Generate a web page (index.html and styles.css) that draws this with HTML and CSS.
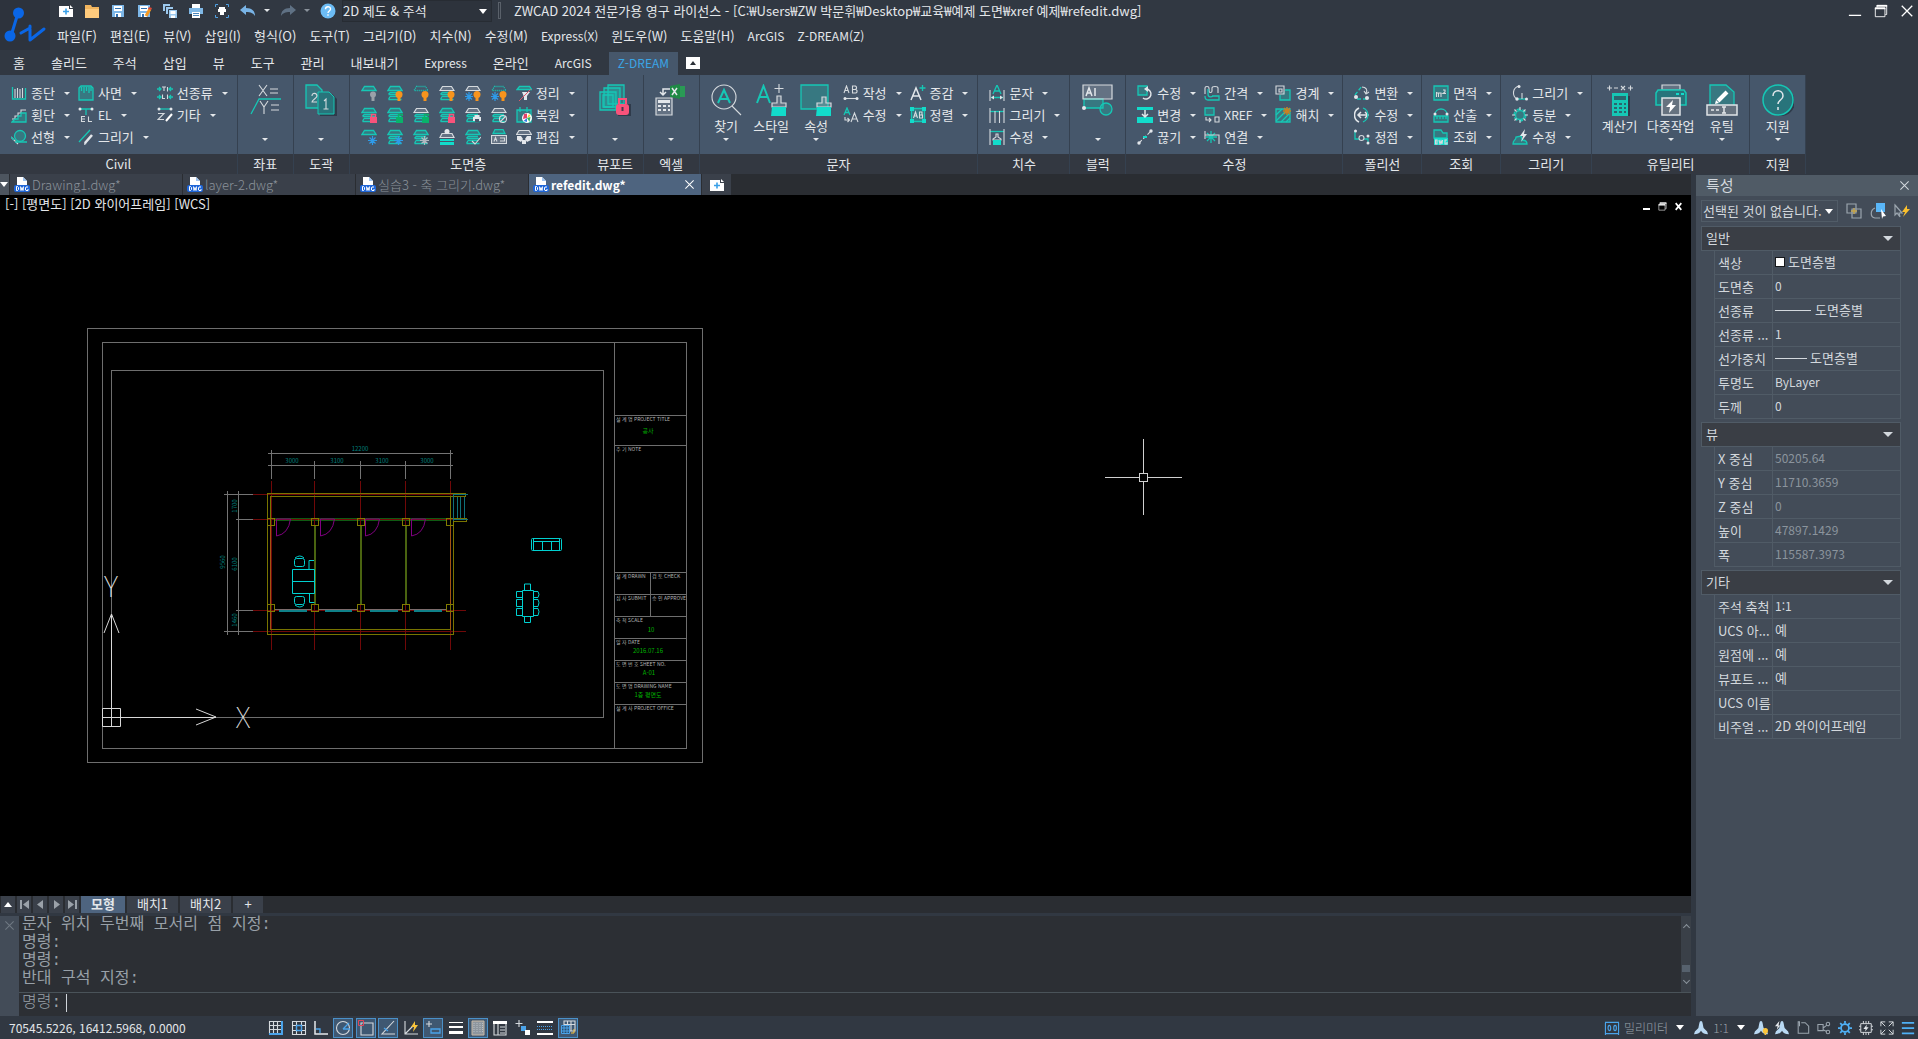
FILE: index.html
```html
<!DOCTYPE html>
<html lang="ko">
<head>
  <meta charset="UTF-8" />
  <meta name="viewport" content="width=device-width, initial-scale=1.0" />
  <title>ZWCAD 2024</title>
  <link rel="stylesheet" href="styles.css">
</head>
<body>
  <!-- icon sprite -->
  <svg class="sprite" aria-hidden="true">
    <!-- quick access -->
    <symbol id="q-new" viewBox="0 0 16 16"><path fill="#fff" d="M1 3h10v3h4v8H1z"/><path fill="#fff" d="M12 2l3 3h-3z"/><path stroke="#3aa0e8" stroke-width="1.6" d="M8 5.500v6M5 8.500h6"/></symbol>
    <symbol id="q-open" viewBox="0 0 16 16"><path fill="#f0b45e" d="M1 2h6l1 2h7v11H1z"/><path fill="#ffcb7d" d="M1 6h14v9H1z"/></symbol>
    <symbol id="q-save" viewBox="0 0 16 16"><path fill="#7db7e8" d="M2 2h12v12H2z"/><path fill="#fff" d="M4 3h8v5H4zM5 10h6v4H5z"/><path fill="#2f6fb0" d="M5 5h6v1H5zM6 11h2v3H6z"/></symbol>
    <symbol id="q-saveas" viewBox="0 0 16 16"><use href="#q-save"/><path stroke="#f59a23" stroke-width="3" d="M14 6l-4 7"/><path fill="#e04a3a" d="M13 4l3 1-1 2-3-1z"/></symbol>
    <symbol id="q-saveall" viewBox="0 0 16 16"><path fill="#9cc9ee" stroke="#2f3742" d="M.5.500h8v8h-8z"/><path fill="#9cc9ee" stroke="#2f3742" d="M3.500 3.500h8v8h-8z"/><path fill="#9cc9ee" stroke="#2f3742" d="M6.500 6.500h9v9h-9z"/><path fill="#fff" d="M8.500 8h5v3h-5zM9 12.500h4V15H9z"/></symbol>
    <symbol id="q-print" viewBox="0 0 16 16"><path fill="#fff" d="M4 1h8v4H4z"/><path fill="#7fb8e6" d="M1 5h14v6H1z"/><path fill="#fff" d="M4 9h8v6H4z"/><path fill="#4a86bb" d="M5 10h6v1H5zM5 12h6v1H5z"/></symbol>
    <symbol id="q-view" viewBox="0 0 16 16"><path fill="none" stroke="#4f9fe0" d="M1.500 4V1.500H4M12 1.500h2.500V4M14.500 12v2.500H12M4 14.500H1.500V12"/><path fill="#fff" d="M5 4h6v2H5zM4 6h8v3H4zM6 9h4v3H6z"/></symbol>
    <symbol id="q-undo" viewBox="0 0 16 16"><path fill="#79b4e6" d="M0 7l6-5v3c6 0 9 3 9 8-2-3-4-4-9-4v3z"/></symbol>
    <symbol id="q-redo" viewBox="0 0 16 16"><path fill="#5f7184" d="M16 7l-6-5v3c-6 0-9 3-9 8 2-3 4-4 9-4v3z"/></symbol>
    <symbol id="q-help" viewBox="0 0 16 16"><circle cx="8" cy="8" r="7.500" fill="#6cbcf5"/><path fill="none" stroke="#fff" stroke-width="1.400" d="M5.500 6.200C5.500 3 10.500 3 10.500 6c0 2-2.500 2-2.500 4M8 11.200v1.600"/></symbol>
    <symbol id="dwg" viewBox="0 0 16 16"><path fill="#fff" d="M3 0h6l4 4v9H3z"/><path fill="#9dc2ee" d="M9 0l4 4H9z"/><rect y="8" width="16" height="7" rx="2" fill="#1f66d8"/><path fill="none" stroke="#fff" d="M2.500 9.500v4h1l1-1v-2l-1-1zM6.500 9.500l.5 4 1-3 1 3 .5-4M14 10h-2l-.5 1v2l.5.500h2v-1.500"/></symbol>

    <!-- civil -->
    <symbol id="c-prof" viewBox="0 0 16 16"><path class="t" d="M1.500 2v12h13V3"/><path class="w" d="M4 4v9M6.500 3v10M9 4v9M11.500 3v10"/></symbol>
    <symbol id="c-slope" viewBox="0 0 16 16"><path class="f" d="M1 3l2-2h10l2 2v12H1z"/><path class="t" d="M3.500 2v4M6 2v6M8.500 2v4M11 2v6M13 2v4"/></symbol>
    <symbol id="c-ltype" viewBox="0 0 16 16"><path class="t" d="M0 4h4M2 2l2 2-2 2M16 4h-4M14 2l-2 2 2 2M0 12h4M2 10l2 2-2 2M16 12h-4M14 10l-2 2 2 2"/><path class="w" d="M5 2h4M7 2v4M10.500 2v4.500M5.500 9.500v4H8M10.500 9.500V14"/></symbol>
    <symbol id="c-cross" viewBox="0 0 16 16"><path class="w" d="M1 12h3V9h3V6h3V3h5"/><path class="f" d="M1 15l3-3h3V9h3V6h5v9z"/></symbol>
    <symbol id="c-el" viewBox="0 0 16 16"><path class="t" d="M2 2h12M8 2v6"/><circle class="wf" cx="2" cy="2" r="1.500"/><circle class="wf" cx="14" cy="2" r="1.500"/><path class="w" d="M7 9.500H3.500v5H7M3.500 12H7M10.500 9.500v5H14"/></symbol>
    <symbol id="c-etc" viewBox="0 0 16 16"><path class="t" d="M2 2h12"/><circle class="wf" cx="2" cy="2" r="1.500"/><circle class="wf" cx="14" cy="2" r="1.500"/><path class="w" d="M1 6.500h6l-6 6h6"/><path stroke="#fff" stroke-width="2" d="M15 7l-6 7"/></symbol>
    <symbol id="c-align" viewBox="0 0 16 16"><circle class="f" cx="9" cy="7" r="5.500"/><path class="w" d="M0 8l7 7"/><path class="t" d="M4 13h12M0 8l3 3"/></symbol>
    <symbol id="c-draw" viewBox="0 0 16 16"><path class="t" d="M1 13L12 1"/><path stroke="#e3e7eb" stroke-width="2.500" d="M14 6l-7 8"/><path class="wf" d="M6 16l.5-3 2 2z"/></symbol>

    <!-- layer base shapes and badges -->
    <symbol id="l-one" viewBox="0 0 16 16"><path class="f" d="M3.500 1.500h9L15 5.500H1z"/></symbol>
    <symbol id="l-onew" viewBox="0 0 16 16"><path class="wo" d="M3.500 1.500h9L15 5.500H1z"/></symbol>
    <symbol id="l-oned" viewBox="0 0 16 16"><path class="t dot" d="M3.500 1.500h9L15 5.500H1z"/></symbol>
    <symbol id="l-rest" viewBox="0 0 16 16"><path class="t" d="M3 7.500h10M1.500 9.500h13M3 11.500h10M1.500 14.500h13M3 7.500l-1.500 2M3 11.500l-1.500 3"/></symbol>
    <symbol id="b-bulb" viewBox="0 0 16 16"><circle cx="12" cy="9.500" r="3.500" fill="#f7941d"/><path fill="#f7941d" d="M10.500 12h3v4h-3z"/></symbol>
    <symbol id="b-off" viewBox="0 0 16 16"><circle cx="12" cy="9.500" r="3" fill="#9aa1a9"/><path fill="#9aa1a9" d="M10.500 12h3v4h-3z"/></symbol>
    <symbol id="b-lock" viewBox="0 0 16 16"><path fill="#f8537b" d="M9 10h7v6H9z"/><path fill="none" stroke="#f8537b" stroke-width="1.500" d="M10.500 10V7.500h4V10"/></symbol>
    <symbol id="b-open" viewBox="0 0 16 16"><path fill="#09b26a" d="M9 10h7v6H9z"/><path fill="none" stroke="#09b26a" stroke-width="1.500" d="M11.500 10V7.500h4V9"/></symbol>
    <symbol id="b-snow" viewBox="0 0 16 16"><path stroke="#2f9be8" stroke-width="1.200" d="M11.500 7v9M7 11.500h9M8.500 8.500l6 6M14.500 8.500l-6 6"/></symbol>
    <symbol id="b-snowl" viewBox="0 0 16 16"><path stroke="#2f9be8" stroke-width="1.200" d="M4 7v9M0 11.500h8M1 8.500l6 6M7 8.500l-6 6"/></symbol>
    <symbol id="b-snowg" viewBox="0 0 16 16"><path stroke="#b1b8c0" stroke-width="1.200" d="M11.500 7v9M7 11.500h9M8.500 8.500l6 6M14.500 8.500l-6 6"/></symbol>
    <symbol id="b-print" viewBox="0 0 16 16"><path class="wf" d="M8 10h8v4H8zM9.500 8h5v2h-5z"/><path fill="#46576b" d="M10 12h4v3h-4z"/></symbol>
    <symbol id="b-ban" viewBox="0 0 16 16"><circle cx="12" cy="12" r="3.500" class="w"/><path class="w" d="M9 15l6-6"/></symbol>
    <symbol id="l-walk" viewBox="0 0 16 16"><path class="wo" d="M3 4.500h10l2 4H1z"/><circle class="wf" cx="8" cy="2.500" r="2.500"/><path class="tf" d="M1 10h14v2H1zM1 13h14v3H1z"/></symbol>
    <symbol id="b-check" viewBox="0 0 16 16"><path class="w" d="M7 12l3 3 6-7"/></symbol>
    <symbol id="l-card" viewBox="0 0 16 16"><path class="f" d="M4 .5h8l2 4H2z"/><path class="wo" d="M.5 6.500h15v8H.5z"/><path class="w" d="M3 12.500l1.500-4 1.500 4M9 9h4.500v3H9"/></symbol>
    <symbol id="l-clean" viewBox="0 0 16 16"><path class="f" d="M3.500 1.500h10l2 3H1z"/><path class="wf" d="M6 7h8l-3 4v4H8v-3z"/><path stroke="#e0586a" d="M3 16L15 4"/></symbol>
    <symbol id="l-restore" viewBox="0 0 16 16"><path class="f" d="M1 3h14v12H1z"/><path class="t" d="M4 0v5M11 0v5"/><circle cx="11" cy="11" r="5" fill="#fff"/><path fill="#f6c833" d="M11 11l3.500-2-1.500-2z"/><path fill="#2eb85c" d="M11 11l3.500-1-1 5z"/><path fill="#317ee8" d="M11 11v4l-3.500-1z"/><path fill="#e4426c" d="M11 11L7 12l1-5 3-.5z"/></symbol>
    <symbol id="l-edit" viewBox="0 0 16 16"><path class="wo" d="M3 1.500h10l2.500 4H.5z"/><path class="wf" d="M1 7h4l2 3-2 3-4-2zM15 7h-4l-2 3 2 3 4-2zM6 11h4v4H6z"/></symbol>

    <!-- text / dimension -->
    <symbol id="t-make" viewBox="0 0 16 16"><path class="w" d="M1 8l2.500-7L6 8M2 5.500h3M9.500 1v7h3.500l1-1V5.500l-1-1H9.500h3l1-1V2l-1-1z"/><path class="w" d="M2 13.500h12"/><circle class="wf" cx="2" cy="13.500" r="1.500"/><circle class="wf" cx="14" cy="13.500" r="1.500"/></symbol>
    <symbol id="t-edit" viewBox="0 0 16 16"><path class="t" d="M1 8l3-7 3 7M2 5.500h4"/><path class="w" d="M8 15l3.500-9 3.500 9M9 12h5M2 10v3h4M4.500 11l2 2-2 2"/></symbol>
    <symbol id="t-inc" viewBox="0 0 16 16"><path class="w2" d="M1 15L6 3l5 12M3 11h6"/><path class="t" d="M12.500 0v6M9.500 3h6"/></symbol>
    <symbol id="t-ord" viewBox="0 0 16 16"><path class="f" d="M1.500 1.500h13v13h-13z"/><path class="tf" d="M0 0h4v4H0zM12 0h4v4h-4zM0 12h4v4H0zM12 12h4v4h-4z"/><path class="w" d="M3.500 11l2-6 2 6M4 9h3M9.500 5v6h3V8h-3 2.500V5z"/></symbol>
    <symbol id="d-text" viewBox="0 0 16 16"><path class="t" d="M4 9l4-9 4 9M5.500 6h5M2 12.500h12"/><path class="w" d="M1 5v11M15 5v11"/><path class="wf" d="M2 12.500l3-2v4zM14 12.500l-3-2v4z"/></symbol>
    <symbol id="d-draw" viewBox="0 0 16 16"><path class="t" d="M1 4.500h14"/><path class="w" d="M1 1v15M6 4v12M10.500 4v12M15 1v15"/></symbol>
    <symbol id="d-edit" viewBox="0 0 16 16"><path class="t" d="M1 2.500h14"/><path class="w" d="M1 0v16M15 0v16M7 5h2v3l3 2v1H4v-1l3-2z"/><path class="tf" d="M4 11h8v5H4z"/></symbol>

    <!-- modify -->
    <symbol id="m-edit" viewBox="0 0 16 16"><path class="f" d="M1 1h9v9H1z"/><path class="w2" d="M9 4a5 5 0 1 1-3 9"/><path class="wf" d="M7 4l4-3v6z"/></symbol>
    <symbol id="m-change" viewBox="0 0 16 16"><path class="tf" d="M0 0h16v3H0zM0 10h16v6H0z"/><path class="w2" d="M8 3v6M5 7l3 3 3-3"/></symbol>
    <symbol id="m-break" viewBox="0 0 16 16"><path class="w dash" d="M2 14L14 2"/><path class="tf" d="M6 7h4v2H6z"/><circle class="wf" cx="2" cy="14" r="1.700"/><circle class="wf" cx="14" cy="2" r="1.700"/></symbol>
    <symbol id="m-gap" viewBox="0 0 16 16"><path class="w" d="M1 9V3c0-2 4-2 4 0v3c0 2 3 2 3 0V3c0-2 6-2 6 0v5"/><path class="t" d="M1 11c0 3 1 4 3 4h11v-4H8M4 4v5c0 4 4 3 5 2"/></symbol>
    <symbol id="m-xref" viewBox="0 0 16 16"><path class="f" d="M1 1h9v7H1z"/><path class="w" d="M2 10v3h5M5 11l2 2-2 2M11 10h4v5h-4z"/></symbol>
    <symbol id="m-join" viewBox="0 0 16 16"><path class="t" d="M7 2v12M2 8h11M3 4l8 8M11 4l-8 8"/><path class="w" d="M1 2v8M1 6h14v9"/></symbol>
    <symbol id="m-bound" viewBox="0 0 16 16"><path class="f" d="M10 5h5v10H5v-5"/><path class="w" d="M1 1h8v8H1zM4 4h3v3H4z"/></symbol>
    <symbol id="m-hatch" viewBox="0 0 16 16"><path class="f" d="M1 2h14v13H1z"/><path class="t" d="M1 8l6-6M1 14L10 5M6 15l9-9M11 15l4-4"/><path stroke="#c98022" stroke-width="1.500" d="M12 0v8M8 4h8M9 1l6 6M15 1L9 7"/></symbol>

    <!-- polyline, query, draw -->
    <symbol id="p-conv" viewBox="0 0 16 16"><path class="t dash" d="M1 10L8 1M3 14h9"/><path class="w" d="M8 2c4 0 6 3 4 6M10 6l2 3 3-2"/><circle class="wf" cx="2" cy="12" r="2"/><circle class="wf" cx="13" cy="13" r="2"/></symbol>
    <symbol id="p-edit" viewBox="0 0 16 16"><path class="w2" d="M5 1C-1 4-1 12 5 15M4 8h10M7 5L4 8l3 3M11 5l3 3-3 3"/><path class="t" d="M9 1c6 2 7 11 0 14"/></symbol>
    <symbol id="p-vert" viewBox="0 0 16 16"><path class="t" d="M1 2v8h4M10 10h4v4"/><circle class="w" cx="7.500" cy="9" r="2.500"/><circle class="wf" cx="1.500" cy="2" r="1.500"/><circle class="wf" cx="14" cy="7" r="1.500"/><circle class="wf" cx="14" cy="14" r="1.500"/></symbol>
    <symbol id="i-area" viewBox="0 0 16 16"><path class="f" d="M1 1h14v14H1z"/><path class="w" d="M3.500 12V7M3.500 8h2v4M5.500 8h2.500v4M10 5h2v2l-2 1.500h3"/></symbol>
    <symbol id="i-calc" viewBox="0 0 16 16"><path class="t" d="M2 8C2 0 14 0 14 8"/><path class="f" d="M1 9h14v6H1z"/><path class="t" d="M4 9v3M7 9v3M10 9v3M13 9v3"/><circle class="wf" cx="2" cy="7" r="1.500"/><circle class="wf" cx="14" cy="7" r="1.500"/></symbol>
    <symbol id="i-look" viewBox="0 0 16 16"><path class="f" d="M1 1h7l2 3h4v5H1z"/><path class="tf" d="M1 9h14v7H1z"/><path class="w" d="M2.500 11v4h1.500V11zM6 11l1 4 1-3 1 3 .5-4M14 11h-2v4h2v-2"/></symbol>
    <symbol id="g-draw" viewBox="0 0 16 16"><path class="w" d="M7 1C0 3 0 11 5 14"/><path class="t" d="M5 14h10"/><circle class="wf" cx="7" cy="1.500" r="1.500"/><circle class="wf" cx="5" cy="14" r="1.700"/><circle class="wf" cx="14.500" cy="14" r="1.500"/><path class="w" d="M10 8v6"/></symbol>
    <symbol id="g-div" viewBox="0 0 16 16"><circle class="t dash" cx="8" cy="8" r="6"/><circle class="f" cx="8" cy="8" r="4.500"/><path class="w" d="M8 0v3M8 13v3M0 8h3M13 8h3M2.500 2.500l2 2M11.500 11.500l2 2M13.500 2.500l-2 2M2.500 13.500l2-2"/></symbol>
    <symbol id="g-edit" viewBox="0 0 16 16"><path class="f" d="M1 15c0-5 3-3 3-7l5-1 1 4c3 0 5 1 5 4z"/><path class="wf" d="M13 0L8 7h3l-2 6 6-8h-3z"/></symbol>

    <!-- big icons -->
    <symbol id="B-coord" viewBox="0 0 32 32"><path class="t" d="M2 30L10 15h22"/><path class="w" d="M10 1l8 11M18 1l-8 11M21 5h8M21 9h8M11 17l4 6 4-6M15 23v7M22 21h8M22 26h8"/></symbol>
    <symbol id="B-sheet" viewBox="0 0 32 32"><path class="sh" d="M15 10h12l5 5v18H15z"/><path class="f" d="M1 1h11l5 5v18H1z"/><path fill="#28747b" stroke="#16c7b5" d="M13 8h11l5 5v17H13z"/><path class="w" d="M7 12c0-4 5-3 5 0 0 2-5 4-5 6h5M19 17l2-2v10M18.500 25h5"/></symbol>
    <symbol id="B-view" viewBox="0 0 32 32"><path class="f" d="M9 1h16v19H9z"/><path class="f" d="M5 4h16v19H5z"/><path class="f" d="M1 8h16v18H1z"/><path class="t" d="M4 11h10v12H4z"/><path class="sh" d="M19 20h13v12H19z"/><rect x="17" y="20" width="13" height="11" rx="3" fill="#f8537b"/><path fill="none" stroke="#f8537b" stroke-width="2" d="M20 20v-5h7v5"/><path stroke="#463c4c" stroke-width="2" d="M23.500 23v4"/></symbol>
    <symbol id="B-xl" viewBox="0 0 32 32"><path class="w2" d="M15 5H8v6M5 8l3 3 3-3"/><path fill="#1f8a45" d="M15 2l10-2v15l-10-2z"/><path fill="#2a9a55" d="M25 2h5v11h-5z"/><path class="w2" d="M17 4l5 7M22 4l-5 7"/><path class="wo" d="M1 14h16v17H1z"/><path class="wf" d="M3 16h12v3H3zM3 21h3v2H3zM8 21h3v2H8zM13 21h2v2h-2zM3 25h3v2H3zM8 25h3v2H8zM13 25h2v2h-2z"/></symbol>
    <symbol id="B-find" viewBox="0 0 32 32"><circle class="w" cx="14" cy="13" r="12"/><path class="w" d="M22 22l9 9"/><path class="t2" d="M8 19l6-13 6 13M10 15h8"/></symbol>
    <symbol id="B-style" viewBox="0 0 32 32"><path class="t2" d="M2 19L8.500 2 15 19M4 13h9"/><path class="w" d="M24 0v9M19.500 4.500h9"/><path class="wo" d="M22 12h4v7h5v4H17v-4h5z"/><path class="tf" d="M17 23h14v9H16z"/></symbol>
    <symbol id="B-prop" viewBox="0 0 32 32"><path class="f" d="M1 1h27v24H1z"/><path class="wo" d="M22 13h4v6h5v4H17v-4h5z"/><path class="tf" d="M17 23h14v9H16z"/></symbol>
    <symbol id="B-block" viewBox="0 0 32 32"><path class="f" d="M2 15h19v9H2z"/><path class="wo" d="M1 1h29v14H1z"/><path class="w2" d="M4 12l3-8 3 8M5 9h4M13 4v8"/><circle class="f" cx="24" cy="25" r="6"/><circle class="wf" cx="2" cy="24" r="2"/></symbol>
    <symbol id="B-calc" viewBox="0 0 32 32"><path class="w" d="M3 4h5M5.500 1.500v5M10 4h4M17 2l4 4M21 2l-4 4M24 4h5M26.500 1.500v5"/><path class="sh" d="M10 12h16v21H10z"/><path fill="#16c7b5" d="M8 9h16v23H8z"/><path fill="#2b666f" d="M10 12h12v4H10zM10 19h3v2h-3zM15 19h3v2h-3zM20 19h2v2h-2zM10 23h3v2h-3zM15 23h3v2h-3zM20 23h2v2h-2zM10 27h3v2h-3zM15 27h3v2h-3zM20 27h2v2h-2z"/></symbol>
    <symbol id="B-multi" viewBox="0 0 32 32"><path class="wo" d="M7 1h18v5H7z"/><path fill="#28747b" stroke="#16c7b5" stroke-width="1.500" d="M3 6h26l2 3v12H1V9z"/><path class="tf" d="M21 9h3v2h-3zM26 9h3v2h-3z"/><path fill="#66727f" stroke="#dfe4e8" stroke-width="1.500" d="M7 14h18v17H7z"/><path fill="#fff" d="M18 16l-7 7h4l-1 6 7-8h-4z"/></symbol>
    <symbol id="B-util" viewBox="0 0 32 32"><path class="f" d="M4 22V1h16l8 7v14z"/><path stroke="#fff" stroke-width="4" d="M21 8l-9 9"/><path fill="#fff" d="M9 20l1-4 3 3z"/><path fill="#66727f" stroke="#dfe4e8" stroke-width="1.500" d="M1 21h30v10H1z"/><path class="w2" d="M5 26h3M10 26h3M18 23v6M16 23h4M16 29h4"/></symbol>
    <symbol id="B-help" viewBox="0 0 32 32"><circle class="sh" cx="19" cy="18" r="14"/><circle cx="16" cy="16" r="15" fill="#28747b" stroke="#16c7b5" stroke-width="1.500"/><path class="w2" d="M11 12c0-7 10-7 10 0 0 4-5 4-5 8M16 23v3"/></symbol>

    <!-- status bar -->
    <symbol id="s-grid" viewBox="0 0 16 16"><path class="w" d="M1 1.500h13M1 5.500h13M1 9.500h13M1.500 1v13M5.500 1v13M9.500 1v13"/><path fill="none" stroke="#4aa3ea" stroke-width="2" d="M1 14h14M14 1v14"/></symbol>
    <symbol id="s-snap" viewBox="0 0 16 16"><path class="w" d="M1.500 1.500h13v13h-13zM5.500 1v14M10.500 1v14M1 5.500h14M1 10.500h14"/><path class="b" d="M5.500 5.500h5v5h-5z"/></symbol>
    <symbol id="s-ortho" viewBox="0 0 16 16"><path class="w2" d="M2 1v13h13"/><path class="b" d="M3 9h4v4"/></symbol>
    <symbol id="s-polar" viewBox="0 0 16 16"><circle class="w" cx="8" cy="8" r="6.500"/><path class="b" stroke-width="2" d="M8 9l6-6M8 9h7"/></symbol>
    <symbol id="s-osnap" viewBox="0 0 16 16"><path class="w" d="M3 3h12v12H3z"/><path fill="none" stroke="#e2475a" d="M.5.500h5v5h-5z"/></symbol>
    <symbol id="s-track" viewBox="0 0 16 16"><path class="w" d="M14 1L2 14h13"/><path class="b" d="M4 8l4 3"/></symbol>
    <symbol id="s-ducs" viewBox="0 0 16 16"><path class="w" d="M2 1v13h13M2 14l8-8"/><path fill="#f8c33a" d="M12 1L8 7h3l-1 5 5-7h-3z"/></symbol>
    <symbol id="s-dyn" viewBox="0 0 16 16"><path class="w" d="M4 1v6M1 4h6"/><path class="b" d="M6 9h9v4H6z"/></symbol>
    <symbol id="s-lw" viewBox="0 0 16 16"><path fill="#fff" d="M1 2h14v1H1zM1 6h14v2H1zM1 11h14v3H1z"/></symbol>
    <symbol id="s-trans" viewBox="0 0 16 16"><path fill="#8e969e" stroke="#c9b8a4" d="M2 1h12v14H2z"/><path stroke="#b9c0c7" class="dot" d="M4 3v10M7 3v10M10 3v10M12.500 3v10"/></symbol>
    <symbol id="s-list" viewBox="0 0 16 16"><path fill="#fff" d="M1 1h14v3H1z"/><path class="w" d="M2 4v11h12V4M6 4v11M8 7h5M8 10h5M8 13h5"/></symbol>
    <symbol id="s-cyc" viewBox="0 0 16 16"><path class="w" d="M4 0v7M.5 3.500h7"/><path fill="#4aa3ea" d="M6 6h5v5H6z"/><path fill="#fff" d="M10 10h5v5h-5z"/></symbol>
    <symbol id="s-iso" viewBox="0 0 16 16"><path fill="#fff" d="M0 1h16v2H0zM0 13h16v2H0z"/><path stroke="#4aa3ea" class="dot" d="M0 6.500h16M0 9.500h16"/></symbol>
    <symbol id="s-anno" viewBox="0 0 16 16"><path class="w" d="M4 1h11v10H4zM7.500 1v10M11 1v10M4 4.500h11"/><path fill="#2b4d6c" stroke="#4aa3ea" d="M1.500 5.500h8v8h-8zM4 5v9M7 5v9M1 8h9M1 11h9"/><path fill="none" stroke="#f8c33a" d="M14 9v4h-3"/></symbol>
    <symbol id="r-unit" viewBox="0 0 16 16"><path class="b" d="M.5 2v14M15.500 2v14M0 1.500h16M0 14.500h16"/><ellipse class="b" cx="5" cy="8" rx="1.500" ry="3"/><ellipse class="b" cx="11.500" cy="8" rx="1.500" ry="3"/></symbol>
    <symbol id="r-a" viewBox="0 0 16 16"><path fill="#b9d9f3" d="M8 0c2 0 2 4 3 8l4 4 1 3c-4 0-6-1-8-4-2 3-4 4-8 4l1-3 4-4c1-4 1-8 3-8z"/></symbol>
    <symbol id="r-abulb" viewBox="0 0 16 16"><use href="#r-a"/><circle cx="13" cy="11" r="3" fill="#fcc53a"/><path fill="#fcc53a" d="M12 13h2v3h-2z"/></symbol>
    <symbol id="r-aauto" viewBox="0 0 16 16"><use href="#r-a"/><path fill="#e6eaee" d="M5 0L0 6h3l-1 4 4-5H4z"/></symbol>
    <symbol id="r-doc" viewBox="0 0 16 16"><path class="g" d="M4 4V1H2.500v13h12V6l-4-4H6M4 6V1.500"/></symbol>
    <symbol id="r-link" viewBox="0 0 16 16"><path class="g" d="M1 4h6v7H1zM7 8l4-3M7 10l4 2"/><circle class="g" cx="12.500" cy="3.500" r="2"/><circle class="g" cx="12.500" cy="12.500" r="2"/></symbol>
    <symbol id="r-gear" viewBox="0 0 16 16"><circle cx="8" cy="8" r="4.500" fill="none" stroke="#4fb0f5" stroke-width="2"/><path stroke="#4fb0f5" stroke-width="2" d="M8 0v3M8 13v3M0 8h3M13 8h3M2.500 2.500l2 2M11.500 11.500l2 2M13.500 2.500l-2 2M2.500 13.500l2-2"/></symbol>
    <symbol id="r-chip" viewBox="0 0 16 16"><path class="w" d="M2 3h12v10H2zM5 0v3M8 0v3M11 0v3M5 13v3M8 13v3M11 13v3M0 6h2M0 10h2M14 6h2M14 10h2"/><path class="wf" d="M9 4L5 9h2.500L7 12l4-5H8.500z"/></symbol>
    <symbol id="r-full" viewBox="0 0 16 16"><path class="w" d="M1 6V1h5M10 1h5v5M15 10v5h-5M6 15H1v-5M1 1l5 5M15 1l-5 5M15 15l-5-5M1 15l5-5"/></symbol>
    <symbol id="r-menu" viewBox="0 0 16 16"><path fill="#4fb0f5" d="M1 1h14v2H1zM1 7h14v2H1zM1 13h14v2H1z"/></symbol>
    <symbol id="x" viewBox="0 0 16 16"><path fill="none" stroke="currentColor" stroke-width="1.500" d="M2 2l12 12M14 2L2 14"/></symbol>
    <symbol id="x-bold" viewBox="0 0 16 16"><path fill="none" stroke="currentColor" stroke-width="3" d="M3 2l10 12M13 2L3 14"/></symbol>
    <symbol id="win-max" viewBox="0 0 16 16"><path fill="none" stroke="currentColor" d="M1.500 4.500h11v10h-11zM3.500 4V1.500h11V12H13"/><path fill="currentColor" d="M3 1h12v2H3zM1 4h12v2H1z"/></symbol>
    <symbol id="win-min" viewBox="0 0 16 16"><path stroke="currentColor" stroke-width="1.500" d="M1 13h14"/></symbol>
  </svg>

  <header class="top">
    <button class="logo" aria-label="ZWCAD">
      <svg viewBox="0 0 50 50"><path fill="none" stroke="#0a66e6" stroke-width="3" stroke-linecap="round" d="M11 36L18 13"/><circle cx="18.500" cy="13" r="5.500" fill="#0a66e6"/><circle cx="10" cy="36" r="5.500" fill="#0a66e6"/><path fill="none" stroke="#0a66e6" stroke-width="3" stroke-linecap="round" d="M21 33l9-5M30 26v14M30 40l14-11"/></svg>
    </button>
    <div class="top-rows">
      <div class="title-row">
        <div class="quick">
          <button aria-label="새로 만들기"><svg class="i"><use href="#q-new"/></svg></button>
          <button aria-label="열기"><svg class="i"><use href="#q-open"/></svg></button>
          <button aria-label="저장"><svg class="i"><use href="#q-save"/></svg></button>
          <button aria-label="다른 이름으로 저장"><svg class="i"><use href="#q-saveas"/></svg></button>
          <button aria-label="모두 저장"><svg class="i"><use href="#q-saveall"/></svg></button>
          <button aria-label="인쇄"><svg class="i"><use href="#q-print"/></svg></button>
          <button aria-label="미리보기"><svg class="i"><use href="#q-view"/></svg></button>
          <button class="drop" aria-label="명령 취소"><svg class="i"><use href="#q-undo"/></svg><i class="arr"></i></button>
          <button class="drop off" aria-label="명령 복구"><svg class="i"><use href="#q-redo"/></svg><i class="arr"></i></button>
          <button aria-label="도움말"><svg class="i"><use href="#q-help"/></svg></button>
        </div>
        <span class="select-box workspace"><select aria-label="작업공간"><option>2D 제도 &amp; 주석</option></select></span>
        <span class="grip"></span>
        <h1 class="title">ZWCAD 2024 전문가용 영구 라이선스 - [C:₩Users₩ZW 박문휘₩Desktop₩교육₩예제 도면₩xref 예제₩refedit.dwg]</h1>
        <div class="win">
          <button aria-label="최소화"><svg class="i"><use href="#win-min"/></svg></button>
          <button aria-label="복원"><svg class="i"><use href="#win-max"/></svg></button>
          <button aria-label="닫기"><svg class="i"><use href="#x"/></svg></button>
        </div>
      </div>
      <nav class="menu">
        <button>파일(F)</button><button>편집(E)</button><button>뷰(V)</button><button>삽입(I)</button><button>형식(O)</button><button>도구(T)</button><button>그리기(D)</button><button>치수(N)</button><button>수정(M)</button><button class="en">Express(X)</button><button>윈도우(W)</button><button>도움말(H)</button><button class="en">ArcGIS</button><button class="en">Z-DREAM(Z)</button>
      </nav>
    </div>
  </header>

  <nav class="ribbon-tabs">
    <button>홈</button><button>솔리드</button><button>주석</button><button>삽입</button><button>뷰</button><button>도구</button><button>관리</button><button>내보내기</button><button class="en">Express</button><button>온라인</button><button class="en">ArcGIS</button><button class="on en">Z-DREAM</button>
    <button class="fold" aria-label="리본 최소화"><i class="arr up"></i></button>
  </nav>

  <div class="ribbon">
    <section class="group">
      <div class="body">
        <div class="col">
          <button class="sm"><svg class="i"><use href="#c-prof"/></svg>종단<i class="arr"></i></button>
          <button class="sm"><svg class="i"><use href="#c-cross"/></svg>횡단<i class="arr"></i></button>
          <button class="sm"><svg class="i"><use href="#c-align"/></svg>선형<i class="arr"></i></button>
        </div>
        <div class="col">
          <button class="sm"><svg class="i"><use href="#c-slope"/></svg>사면<i class="arr"></i></button>
          <button class="sm en"><svg class="i"><use href="#c-el"/></svg>EL<i class="arr"></i></button>
          <button class="sm"><svg class="i"><use href="#c-draw"/></svg>그리기<i class="arr"></i></button>
        </div>
        <div class="col">
          <button class="sm"><svg class="i"><use href="#c-ltype"/></svg>선종류<i class="arr"></i></button>
          <button class="sm"><svg class="i"><use href="#c-etc"/></svg>기타<i class="arr"></i></button>
        </div>
      </div>
      <h2>Civil</h2>
    </section>
    <section class="group one">
      <div class="body"><button class="big" aria-label="좌표"><svg class="I"><use href="#B-coord"/></svg><span></span><i class="arr"></i></button></div>
      <h2>좌표</h2>
    </section>
    <section class="group one">
      <div class="body"><button class="big" aria-label="도곽"><svg class="I"><use href="#B-sheet"/></svg><span></span><i class="arr"></i></button></div>
      <h2>도곽</h2>
    </section>
    <section class="group roomy">
      <div class="body">
        <div class="layers">
          <button aria-label="도면층 끄기"><svg class="i"><use href="#l-one"/><use href="#b-off"/></svg></button>
          <button aria-label="도면층 켜기"><svg class="i"><use href="#l-one"/><use href="#l-rest"/><use href="#b-bulb"/></svg></button>
          <button aria-label="선택 도면층 켜기"><svg class="i"><use href="#l-oned"/><use href="#b-bulb"/></svg></button>
          <button aria-label="다른 도면층 끄기"><svg class="i"><use href="#l-onew"/><use href="#l-rest"/><use href="#b-bulb"/></svg></button>
          <button aria-label="켜기와 동결해제"><svg class="i"><use href="#l-onew"/><use href="#b-snowl"/><use href="#b-bulb"/></svg></button>
          <button aria-label="모두 켜기"><svg class="i"><use href="#l-oned"/><use href="#b-snowl"/><use href="#b-bulb"/></svg></button>
          <button aria-label="도면층 잠금"><svg class="i"><use href="#l-one"/><use href="#l-rest"/><use href="#b-lock"/></svg></button>
          <button aria-label="도면층 잠금해제"><svg class="i"><use href="#l-one"/><use href="#l-rest"/><use href="#b-open"/></svg></button>
          <button aria-label="선택 잠금해제"><svg class="i"><use href="#l-onew"/><use href="#l-rest"/><use href="#b-open"/></svg></button>
          <button aria-label="다른 도면층 잠금"><svg class="i"><use href="#l-one"/><use href="#l-rest"/><use href="#b-lock"/></svg></button>
          <button aria-label="도면층 출력"><svg class="i"><use href="#l-onew"/><use href="#l-rest"/><use href="#b-print"/></svg></button>
          <button aria-label="도면층 출력안함"><svg class="i"><use href="#l-onew"/><use href="#l-rest"/><use href="#b-ban"/></svg></button>
          <button aria-label="도면층 동결"><svg class="i"><use href="#l-one"/><use href="#b-snow"/></svg></button>
          <button aria-label="다른 도면층 동결"><svg class="i"><use href="#l-one"/><use href="#l-rest"/><use href="#b-snow"/></svg></button>
          <button aria-label="동결해제"><svg class="i"><use href="#l-one"/><use href="#l-rest"/><use href="#b-snowg"/></svg></button>
          <button aria-label="도면층 보행"><svg class="i"><use href="#l-walk"/></svg></button>
          <button aria-label="현재 도면층"><svg class="i"><use href="#l-one"/><use href="#l-rest"/><use href="#b-check"/></svg></button>
          <button aria-label="도면층 이름"><svg class="i"><use href="#l-card"/></svg></button>
        </div>
        <div class="col">
          <button class="sm"><svg class="i"><use href="#l-clean"/></svg>정리<i class="arr"></i></button>
          <button class="sm"><svg class="i"><use href="#l-restore"/></svg>복원<i class="arr"></i></button>
          <button class="sm"><svg class="i"><use href="#l-edit"/></svg>편집<i class="arr"></i></button>
        </div>
      </div>
      <h2>도면층</h2>
    </section>
    <section class="group one">
      <div class="body"><button class="big" aria-label="뷰포트"><svg class="I"><use href="#B-view"/></svg><span></span><i class="arr"></i></button></div>
      <h2>뷰포트</h2>
    </section>
    <section class="group one">
      <div class="body"><button class="big" aria-label="엑셀"><svg class="I"><use href="#B-xl"/></svg><span></span><i class="arr"></i></button></div>
      <h2>엑셀</h2>
    </section>
    <section class="group">
      <div class="body">
        <div class="bigs">
          <button class="big"><svg class="I"><use href="#B-find"/></svg><span>찾기</span><i class="arr"></i></button>
          <button class="big"><svg class="I"><use href="#B-style"/></svg><span>스타일</span><i class="arr"></i></button>
          <button class="big"><svg class="I"><use href="#B-prop"/></svg><span>속성</span><i class="arr"></i></button>
        </div>
        <div class="col">
          <button class="sm"><svg class="i"><use href="#t-make"/></svg>작성<i class="arr"></i></button>
          <button class="sm"><svg class="i"><use href="#t-edit"/></svg>수정<i class="arr"></i></button>
        </div>
        <div class="col">
          <button class="sm"><svg class="i"><use href="#t-inc"/></svg>증감<i class="arr"></i></button>
          <button class="sm"><svg class="i"><use href="#t-ord"/></svg>정렬<i class="arr"></i></button>
        </div>
      </div>
      <h2>문자</h2>
    </section>
    <section class="group">
      <div class="body">
        <div class="col">
          <button class="sm"><svg class="i"><use href="#d-text"/></svg>문자<i class="arr"></i></button>
          <button class="sm"><svg class="i"><use href="#d-draw"/></svg>그리기<i class="arr"></i></button>
          <button class="sm"><svg class="i"><use href="#d-edit"/></svg>수정<i class="arr"></i></button>
        </div>
      </div>
      <h2>치수</h2>
    </section>
    <section class="group one">
      <div class="body"><button class="big" aria-label="블럭"><svg class="I"><use href="#B-block"/></svg><span></span><i class="arr"></i></button></div>
      <h2>블럭</h2>
    </section>
    <section class="group tight">
      <div class="body">
        <div class="col">
          <button class="sm"><svg class="i"><use href="#m-edit"/></svg>수정<i class="arr"></i></button>
          <button class="sm"><svg class="i"><use href="#m-change"/></svg>변경<i class="arr"></i></button>
          <button class="sm"><svg class="i"><use href="#m-break"/></svg>끊기<i class="arr"></i></button>
        </div>
        <div class="col">
          <button class="sm"><svg class="i"><use href="#m-gap"/></svg>간격<i class="arr"></i></button>
          <button class="sm en"><svg class="i"><use href="#m-xref"/></svg>XREF<i class="arr"></i></button>
          <button class="sm"><svg class="i"><use href="#m-join"/></svg>연결<i class="arr"></i></button>
        </div>
        <div class="col">
          <button class="sm"><svg class="i"><use href="#m-bound"/></svg>경계<i class="arr"></i></button>
          <button class="sm"><svg class="i"><use href="#m-hatch"/></svg>해치<i class="arr"></i></button>
        </div>
      </div>
      <h2>수정</h2>
    </section>
    <section class="group tight">
      <div class="body">
        <div class="col">
          <button class="sm"><svg class="i"><use href="#p-conv"/></svg>변환<i class="arr"></i></button>
          <button class="sm"><svg class="i"><use href="#p-edit"/></svg>수정<i class="arr"></i></button>
          <button class="sm"><svg class="i"><use href="#p-vert"/></svg>정점<i class="arr"></i></button>
        </div>
      </div>
      <h2>폴리선</h2>
    </section>
    <section class="group tight">
      <div class="body">
        <div class="col">
          <button class="sm"><svg class="i"><use href="#i-area"/></svg>면적<i class="arr"></i></button>
          <button class="sm"><svg class="i"><use href="#i-calc"/></svg>산출<i class="arr"></i></button>
          <button class="sm"><svg class="i"><use href="#i-look"/></svg>조회<i class="arr"></i></button>
        </div>
      </div>
      <h2>조회</h2>
    </section>
    <section class="group tight">
      <div class="body">
        <div class="col">
          <button class="sm"><svg class="i"><use href="#g-draw"/></svg>그리기<i class="arr"></i></button>
          <button class="sm"><svg class="i"><use href="#g-div"/></svg>등분<i class="arr"></i></button>
          <button class="sm"><svg class="i"><use href="#g-edit"/></svg>수정<i class="arr"></i></button>
        </div>
      </div>
      <h2>그리기</h2>
    </section>
    <section class="group">
      <div class="body">
        <div class="bigs wide">
          <button class="big"><svg class="I"><use href="#B-calc"/></svg><span>계산기</span></button>
          <button class="big"><svg class="I"><use href="#B-multi"/></svg><span>다중작업</span><i class="arr"></i></button>
          <button class="big"><svg class="I"><use href="#B-util"/></svg><span>유틸</span><i class="arr"></i></button>
        </div>
      </div>
      <h2>유틸리티</h2>
    </section>
    <section class="group one">
      <div class="body"><button class="big"><svg class="I"><use href="#B-help"/></svg><span>지원</span><i class="arr"></i></button></div>
      <h2>지원</h2>
    </section>
  </div>

  <div class="work">
    <main class="docs">
      <div class="doc-tabs">
        <button class="pick" aria-label="도면 목록"><i class="arr lg"></i></button>
        <div class="doc"><svg class="i"><use href="#dwg"/></svg><span>Drawing1.dwg*</span></div>
        <div class="doc"><svg class="i"><use href="#dwg"/></svg><span>layer-2.dwg*</span></div>
        <div class="doc"><svg class="i"><use href="#dwg"/></svg><span>실습3 - 축 그리기.dwg*</span></div>
        <div class="doc on"><svg class="i"><use href="#dwg"/></svg><span>refedit.dwg*</span><button aria-label="탭 닫기"><svg class="i s"><use href="#x"/></svg></button></div>
        <button class="new" aria-label="새 도면"><svg class="i"><use href="#q-new"/></svg></button>
      </div>

      <div class="canvas">
        <div class="view-label">[-] [평면도] [2D 와이어프레임] [WCS]</div>
        <div class="view-win">
          <button aria-label="도면 최소화"><svg class="i"><path fill="#fff" d="M1 6h7v2H1z"/></svg></button>
          <button aria-label="도면 복원"><svg class="i"><use href="#win-max"/></svg></button>
          <button aria-label="도면 닫기"><svg class="i"><use href="#x-bold"/></svg></button>
        </div>
        <svg class="model">
          <g transform="translate(0 -195)">
            <!-- sheet frame -->
            <g fill="none" stroke="#6e6e6e" shape-rendering="crispEdges">
              <path d="M87.500 328.500h615v434h-615zM102 342.500h584.500v406H102zM111.500 370.500h491.500v346.500H111.500zM614.500 342v406"/>
              <path d="M614 415.500h72M614 445.500h72M614 572.500h72M614 594.500h72M614 616.500h72M614 638.500h72M614 660.500h72M614 682.500h72M614 704.500h72M650.500 572v44"/>
            </g>
            <g class="tb">
              <text x="616" y="421">설 계 명 PROJECT TITLE</text>
              <text x="616" y="451">주 기 NOTE</text>
              <text x="616" y="578">설 계 DRAWN</text><text x="652" y="578">검 토 CHECK</text>
              <text x="616" y="600">심 사 SUBMIT</text><text x="652" y="600">승 인 APPROVE</text>
              <text x="616" y="622">축 척 SCALE</text>
              <text x="616" y="644">일 자 DATE</text>
              <text x="616" y="666">도 면 번 호 SHEET NO.</text>
              <text x="616" y="688">도 면 명 DRAWING NAME</text>
              <text x="616" y="710">설 계 사 PROJECT OFFICE</text>
            </g>
            <g class="tv">
              <text x="648" y="433">공사</text><text x="651" y="632">10</text><text x="648" y="653">2016.07.16</text>
              <text x="649" y="675">A-01</text><text x="648" y="697">1층 평면도</text>
            </g>

            <!-- dimensions -->
            <path class="dim" d="M268 453.500h185M268 465.500h185M271.500 450v29M314.500 461v18M360.500 461v18M405.500 461v18M450.500 450v29M227.500 491v144M238.500 491v144M224 494.500h30M236 519.500h18M236 610.500h18M224 631.500h30"/>
            <g class="dt">
              <text x="360" y="451">12200</text><text x="292" y="463">3000</text><text x="337" y="463">3100</text><text x="382" y="463">3100</text><text x="427" y="463">3000</text>
              <text transform="translate(225 562) rotate(-90)">9560</text><text transform="translate(237 506) rotate(-90)">1700</text><text transform="translate(237 564) rotate(-90)">6100</text><text transform="translate(237 620) rotate(-90)">1460</text>
            </g>

            <!-- walls, grid, columns -->
            <g fill="none" shape-rendering="crispEdges">
              <path stroke="#0f5a12" stroke-width="3" d="M275 519.500h172"/>
              <path stroke="#700808" d="M271.500 481v169M314.500 481v169M360.500 481v169M405.500 481v169M450.500 481v169M253 494.500h213M253 519.500h200M253 610.500h213M253 631.500h213"/>
              <path stroke="#4a6410" stroke-width="2" d="M315 525v79M361 525v79M406 525v79"/>
              <path stroke="#787400" d="M453.500 521v113.500h-186V493.500h198v3H270.500v133h180V497M454 521.500h12v-3h-12"/>
              <path stroke="#a35313" d="M270.500 525v79M450.500 525v79M270.500 612v17M450.500 612v17"/>
              <path stroke="#807b00" d="M267.500 518.500h7v7h-7zM311.500 518.500h7v7h-7zM357.500 518.500h7v7h-7zM402.500 518.500h7v7h-7zM446.500 518.500h7v7h-7zM267.500 604.500h7v7h-7zM311.500 604.500h7v7h-7zM357.500 604.500h7v7h-7zM402.500 604.500h7v7h-7zM446.500 604.500h7v7h-7z"/>
              <path stroke="#7c6c6c" d="M275 609.500h36M319 609.500h38M365 609.500h37M410 609.500h36"/>
              <path stroke="#0f8088" stroke-width="2" d="M279 611h28M325 611h27M370 611h28M414 611h28"/>
              <path stroke="#0f7078" d="M453.500 494v27M457.500 497v21M460.500 497v21M464.500 497v21M454 494.500h14M454 519.500h14"/>
            </g>
            <path class="door" d="M276.500 519v17q12-2 14-17h-14M320.500 519v17q12-2 14-17h-14M365.500 519v17q12-2 14-17h-14M411.500 519v17q12-2 14-17h-14"/>

            <!-- furniture blocks -->
            <g class="furn">
              <path d="M292.500 569.500h22v24h-22zM292 581.500h22M314 560.500h-5v9M309.500 594v8.500h5"/>
              <rect x="294.500" y="558.500" width="10" height="8" rx="2"/><path d="M295 558q5-4 9 0"/>
              <rect x="294.500" y="596.500" width="10" height="8" rx="2"/><path d="M295 605q5 4 9 0"/>
              <rect x="531.500" y="538.500" width="30" height="12" rx="1"/><path d="M533.500 539v11M559.500 539v11M533 541.500h26M542.500 542v8M551.500 542v8"/>
              <path d="M522.500 590.500h11v26h-11zM524.500 590v-6h6v6M524.500 617v5.500h6V617"/>
              <path d="M522 591.500h-5.500v6h5.500M522 599.500h-5.500v7h5.500M522 608.500h-5.500v7h5.500M534 591.500h4q2 3 0 6h-4M534 599.500h4q2 3 0 7h-4M534 608.500h4q2 3 0 7h-4"/>
            </g>

            <!-- UCS icon -->
            <path class="ucs" d="M102.500 708.500h18v18h-18zM111.500 726V614M104 633l7.500-19 7.500 19M102 717.500h114M196 709l20 8-20 8"/>
            <text class="axis" x="111" y="597">Y</text>
            <text class="axis" x="243" y="728">X</text>

            <!-- crosshair -->
            <path class="cross" d="M1105 477.500h34M1147 477.500h35M1143.500 439v34M1143.500 481v34M1139.500 473.500h8v8h-8z"/>
          </g>
        </svg>
      </div>

      <div class="sheets">
        <button class="nav" aria-label="위로"><i class="arr up lg"></i></button>
        <button class="nav" aria-label="처음"><svg class="i s"><path fill="#9aa1a9" d="M1 1h2v9H1zM10 1v9L4 5.500z"/></svg></button>
        <button class="nav" aria-label="이전"><svg class="i s"><path fill="#9aa1a9" d="M8 1v9L2 5.500z"/></svg></button>
        <button class="nav" aria-label="다음"><svg class="i s"><path fill="#9aa1a9" d="M3 1v9l6-4.500z"/></svg></button>
        <button class="nav" aria-label="마지막"><svg class="i s"><path fill="#9aa1a9" d="M1 1v9l6-4.500zM8 1h2v9H8z"/></svg></button>
        <button class="on">모형</button><button>배치1</button><button>배치2</button><button>+</button>
      </div>

      <div class="cmd">
        <button class="cmd-x" aria-label="명령행 닫기"><svg class="i s"><use href="#x"/></svg></button>
        <div class="cmd-main">
          <div class="history">
            <div class="lines">
              <p>문자 위치 두번째 모서리 점 지정:</p>
              <p>명령:</p>
              <p>명령:</p>
              <p>반대 구석 지정:</p>
            </div>
            <div class="bar"><i class="chev"></i><i class="thumb"></i><i class="chev dn"></i></div>
          </div>
          <label class="prompt">명령:<i class="caret"></i><input type="text"></label>
        </div>
      </div>
    </main>

    <aside class="props">
      <div class="props-head"><h2>특성</h2><button aria-label="특성 닫기"><svg class="i s"><use href="#x"/></svg></button></div>
      <div class="props-sel">
        <span class="select-box"><select aria-label="선택"><option>선택된 것이 없습니다.</option></select></span>
        <button aria-label="추가 선택"><svg class="i"><path class="g" d="M1 1h9v9H1zM6 6h9v9H6z"/><path stroke="#f0c040" d="M8 5v6M5 8h6"/></svg></button>
        <button aria-label="객체 선택"><svg class="i"><path fill="#59b6f8" d="M6 0h9v9H6z"/><path class="g" d="M5 5c-5 2-5 9 0 10h5"/><path fill="#fff" d="M11 6l5 7-3 .5L12 16z"/></svg></button>
        <button aria-label="신속 선택"><svg class="i"><path class="g" d="M1 2l7 8H5l1 4-3-4-2 2z"/><path fill="#fbc02d" d="M13 2L8 9h3l-2 5 7-8h-3z"/></svg></button>
      </div>

      <button class="cat">일반<i class="arr xl"></i></button>
      <table>
        <tr><th>색상</th><td><i class="swatch"></i>도면층별</td></tr>
        <tr><th>도면층</th><td class="n">0</td></tr>
        <tr><th>선종류</th><td><i class="line"></i>도면층별</td></tr>
        <tr><th>선종류 ...</th><td class="n">1</td></tr>
        <tr><th>선가중치</th><td><i class="line short"></i>도면층별</td></tr>
        <tr><th>투명도</th><td class="n">ByLayer</td></tr>
        <tr><th>두께</th><td class="n">0</td></tr>
      </table>

      <button class="cat">뷰<i class="arr xl"></i></button>
      <table class="dim-vals">
        <tr><th>X 중심</th><td class="n">50205.64</td></tr>
        <tr><th>Y 중심</th><td class="n">11710.3659</td></tr>
        <tr><th>Z 중심</th><td class="n">0</td></tr>
        <tr><th>높이</th><td class="n">47897.1429</td></tr>
        <tr><th>폭</th><td class="n">115587.3973</td></tr>
      </table>

      <button class="cat">기타<i class="arr xl"></i></button>
      <table>
        <tr><th>주석 축척</th><td class="n">1:1</td></tr>
        <tr><th>UCS 아...</th><td>예</td></tr>
        <tr><th>원점에 ...</th><td>예</td></tr>
        <tr><th>뷰포트 ...</th><td>예</td></tr>
        <tr><th>UCS 이름</th><td></td></tr>
        <tr><th>비주얼 ...</th><td>2D 와이어프레임</td></tr>
      </table>
    </aside>
  </div>

  <footer class="status">
    <div class="coords">70545.5226, 16412.5968, 0.0000</div>
    <div class="modes">
      <button aria-label="그리드"><svg class="i"><use href="#s-grid"/></svg></button>
      <button aria-label="스냅"><svg class="i"><use href="#s-snap"/></svg></button>
      <button aria-label="직교"><svg class="i"><use href="#s-ortho"/></svg></button>
      <button class="on" aria-label="극좌표"><svg class="i"><use href="#s-polar"/></svg></button>
      <button class="on" aria-label="객체스냅"><svg class="i"><use href="#s-osnap"/></svg></button>
      <button class="on" aria-label="객체추적"><svg class="i"><use href="#s-track"/></svg></button>
      <button aria-label="동적 UCS"><svg class="i"><use href="#s-ducs"/></svg></button>
      <button class="on" aria-label="동적 입력"><svg class="i"><use href="#s-dyn"/></svg></button>
      <button aria-label="선가중치"><svg class="i"><use href="#s-lw"/></svg></button>
      <button class="on" aria-label="투명도"><svg class="i"><use href="#s-trans"/></svg></button>
      <button aria-label="빠른 특성"><svg class="i"><use href="#s-list"/></svg></button>
      <button aria-label="선택 순환"><svg class="i"><use href="#s-cyc"/></svg></button>
      <button aria-label="객체 분리"><svg class="i"><use href="#s-iso"/></svg></button>
      <button class="on" aria-label="주석 모니터"><svg class="i"><use href="#s-anno"/></svg></button>
    </div>
    <div class="status-right">
      <button class="unit"><svg class="i"><use href="#r-unit"/></svg>밀리미터<i class="arr lg"></i></button>
      <button class="scale"><svg class="i"><use href="#r-a"/></svg>1:1<i class="arr lg"></i></button>
      <button aria-label="주석 가시성"><svg class="i"><use href="#r-abulb"/></svg></button>
      <button aria-label="자동 축척"><svg class="i"><use href="#r-aauto"/></svg></button>
      <button aria-label="외부참조"><svg class="i"><use href="#r-doc"/></svg></button>
      <button aria-label="연결 상태"><svg class="i"><use href="#r-link"/></svg></button>
      <button aria-label="설정"><svg class="i"><use href="#r-gear"/></svg></button>
      <button aria-label="하드웨어 가속"><svg class="i"><use href="#r-chip"/></svg></button>
      <button aria-label="전체 화면"><svg class="i"><use href="#r-full"/></svg></button>
      <button aria-label="사용자화"><svg class="i"><use href="#r-menu"/></svg></button>
    </div>
  </footer>
</body>
</html>
```
FILE: styles.css
```css
* {
  box-sizing: border-box;
}

body {
  margin: 0;
  height: 100vh;
  display: flex;
  flex-direction: column;
  overflow: hidden;
  background: #313842;
  color: #e4e7ea;
  font: 13px/16px "Noto Sans CJK KR", sans-serif;
}

h1, h2, p {
  margin: 0;
  font-size: inherit;
  font-weight: normal;
}

button {
  display: flex;
  align-items: center;
  padding: 0;
  border: 0;
  background: none;
  color: inherit;
  font: inherit;
  white-space: nowrap;
}

.en {
  font-size: 12px;
}

.sprite {
  position: absolute;
  width: 0;
  height: 0;
}

/* icons */
.i {
  display: block;
  flex: none;
  width: 16px;
  height: 16px;
}

.i.s {
  width: 11px;
  height: 11px;
}

.I {
  display: block;
  width: 32px;
  height: 32px;
  overflow: visible;
}

.t { fill: none; stroke: #16c7b5; stroke-width: 1.3; }
.t2 { fill: none; stroke: #16c7b5; stroke-width: 2; }
.tf { fill: #12dccb; }
.f { fill: rgba(22, 199, 181, 0.3); stroke: #16c7b5; stroke-width: 1.3; }
.w { fill: none; stroke: #d5dade; stroke-width: 1.1; }
.w2 { fill: none; stroke: #e3e7eb; stroke-width: 1.5; }
.wf { fill: #e3e7eb; }
.wo { fill: rgba(220, 226, 232, 0.2); stroke: #d5dade; stroke-width: 1.2; }
.g { fill: none; stroke: #9ba5ae; stroke-width: 1.2; }
.b { fill: none; stroke: #4aa3ea; stroke-width: 1.3; }
.sh { fill: #2f3b4b; }
.dot { stroke-dasharray: 1 1; }
.dash { stroke-dasharray: 4 2; }

.arr {
  flex: none;
  border: 3px solid transparent;
  border-top: 3px solid currentColor;
  border-bottom: 0;
}

.arr.up {
  border-top: 0;
  border-bottom: 4px solid currentColor;
}

.arr.lg {
  border-width: 5px 4px 0;
  color: #fff;
}

.arr.up.lg {
  border-width: 0 4px 5px;
}

.arr.xl {
  border-width: 5px 5px 0;
}

/* title and menu */
.top {
  display: flex;
  height: 50px;
}

.logo {
  width: 50px;
  background: #2d333d;
}

.logo svg {
  width: 50px;
  height: 50px;
}

.top-rows {
  flex: 1;
  min-width: 0;
}

.title-row {
  display: flex;
  align-items: center;
  height: 23px;
  padding-bottom: 2px;
}

.quick {
  display: flex;
  gap: 10px;
  padding: 0 6px 0 8px;
}

.quick .drop {
  gap: 8px;
}

.quick .off .arr {
  color: #8a929b;
}

.select-box {
  position: relative;
  display: block;
  border: 1px solid #272c33;
}

.select-box select {
  width: 100%;
  height: 20px;
  padding: 0 2px;
  border: 0;
  appearance: none;
  background: transparent;
  color: inherit;
  font: inherit;
}

.select-box::after {
  content: "";
  position: absolute;
  right: 4px;
  top: 8px;
  border: 4px solid transparent;
  border-top: 5px solid #fff;
  border-bottom: 0;
}

.workspace {
  width: 150px;
  background: #2d333c;
}

.workspace select {
  padding: 0;
}

.grip {
  width: 3px;
  height: 17px;
  margin: 0 13px 0 6px;
  border: 1px solid #5a616a;
}

.title {
  flex: 1;
  white-space: nowrap;
}

.win {
  display: flex;
  gap: 12px;
  padding: 0 4px;
  color: #fff;
}

.win .i {
  width: 14px;
  height: 14px;
}

.menu {
  display: flex;
  align-items: center;
  gap: 13px;
  height: 27px;
  padding: 0 0 2px 7px;
}

.ribbon-tabs {
  display: flex;
  align-items: flex-end;
  gap: 8px;
  height: 25px;
  padding-left: 4px;
}

.ribbon-tabs button {
  height: 23px;
  padding: 0 9px 1px;
}

.ribbon-tabs .on {
  background: #46576b;
  color: #3aa5e6;
}

.ribbon-tabs .fold {
  align-self: center;
  justify-content: center;
  width: 14px;
  height: 12px;
  padding: 0;
  background: #fff;
  color: #2b3038;
}

/* ribbon */
.ribbon {
  display: flex;
  height: 99px;
  flex: none;
}

.group {
  flex: none;
  border-right: 1px solid #354150;
}

.body {
  display: flex;
  gap: 8px;
  height: 79px;
  padding: 7px 9px 0 11px;
  background: #46576b;
}

.group h2 {
  height: 20px;
  line-height: 20px;
  text-align: center;
  background: #333841;
}

.group.one {
  width: 56px;
}

.one .body {
  justify-content: center;
  padding: 7px 0 0;
}

.tight .body {
  padding-right: 8px;
}

.roomy .body {
  padding-right: 12px;
}

.sm {
  gap: 4px;
  height: 22px;
}

.sm .arr {
  margin-left: 5px;
}

.layers {
  display: grid;
  grid-template-columns: repeat(6, 16px);
  grid-auto-rows: 22px;
  column-gap: 10px;
  margin-right: 1px;
}

.bigs {
  display: grid;
  grid-template-columns: repeat(3, 45px);
  margin: 0 -4px 0 -7px;
}

.bigs.wide {
  grid-template-columns: repeat(3, 51px);
  margin: 0 -7px 0 -9px;
}

.big {
  flex-direction: column;
  height: 61px;
  padding-top: 2px;
}

.big span {
  height: 16px;
  margin: 2px 0 4px;
}

/* work area */
.work {
  flex: 1;
  display: flex;
  min-height: 0;
}

.docs {
  flex: 1;
  display: flex;
  flex-direction: column;
  min-width: 0;
}

.doc-tabs {
  display: flex;
  gap: 1px;
  height: 21px;
  background: #2a2d32;
  font-weight: 300;
}

.pick {
  width: 9px;
  background: #4d555f;
}

.doc {
  display: flex;
  align-items: center;
  width: 172px;
  padding: 0 6px 0 4px;
  gap: 2px;
  background: #3a404a;
  color: #8b929a;
}

.doc span {
  flex: 1;
}

.doc.on {
  background: #4e647f;
  color: #fff;
  font-size: 12px;
  font-weight: bold;
}

.new {
  width: 29px;
  justify-content: center;
  background: #3a404a;
}

.canvas {
  position: relative;
  flex: 1;
  min-height: 0;
  background: #000;
}

.model {
  display: block;
  width: 100%;
  height: 100%;
}

.view-label {
  position: absolute;
  left: 5px;
  top: 1px;
}

.view-win {
  position: absolute;
  right: 8px;
  top: 7px;
  display: flex;
  gap: 7px;
  color: #fff;
}

.view-win .i {
  width: 9px;
  height: 9px;
}

.tb text {
  font-size: 5px;
  fill: #b4b4b4;
}

.tv text {
  font-size: 6px;
  fill: #00b400;
  text-anchor: middle;
}

.dim {
  fill: none;
  stroke: #747474;
  shape-rendering: crispEdges;
}

.dt text {
  font-size: 6px;
  fill: #00807f;
  text-anchor: middle;
}

.door {
  fill: none;
  stroke: #800080;
}

.furn {
  fill: none;
  stroke: #00d0d0;
}

.ucs {
  fill: none;
  stroke: #d8d8d8;
}

.axis {
  font-size: 29px;
  font-weight: 100;
  fill: #e0e0e0;
  text-anchor: middle;
}

.cross {
  fill: none;
  stroke: #d0d0d0;
  shape-rendering: crispEdges;
}

.sheets {
  display: flex;
  gap: 2px;
  height: 20px;
  padding-left: 1px;
  background: #2a2d32;
  border-bottom: 3px solid #313842;
}

.sheets button {
  justify-content: center;
  min-width: 30px;
  padding: 0 10px 2px;
  background: #3a404a;
}

.sheets .nav {
  min-width: 14px;
  width: 14px;
  padding: 0;
}

.sheets .on {
  background: #4e647f;
  font-weight: bold;
}

.cmd {
  display: flex;
  height: 100px;
  background: #2c2f34;
  color: #98a0a8;
  font: 300 16px/18px "Liberation Mono", "Noto Sans CJK KR", monospace;
}

.cmd-x {
  align-items: flex-start;
  justify-content: center;
  width: 19px;
  padding-top: 4px;
  background: #434c58;
  color: #707983;
}

.cmd-main {
  flex: 1;
  display: flex;
  flex-direction: column;
}

.history {
  flex: 1;
  display: flex;
  justify-content: space-between;
  padding-left: 3px;
  border-bottom: 1px solid #4a5359;
}

.bar {
  display: flex;
  flex-direction: column;
  align-items: center;
  width: 10px;
  padding: 9px 0;
  background: #3a4048;
}

.chev {
  width: 5px;
  height: 5px;
  border: solid #8a929b;
  border-width: 1px 0 0 1px;
  transform: rotate(45deg);
}

.chev.dn {
  transform: rotate(225deg);
}

.thumb {
  width: 8px;
  height: 7px;
  margin: auto 0 6px;
  background: #56616d;
}

.prompt {
  display: flex;
  align-items: center;
  height: 23px;
  padding: 0 0 4px 3px;
}

.prompt input {
  flex: 1;
  border: 0;
  outline: 0;
  background: transparent;
  color: inherit;
  font: inherit;
}

.caret {
  width: 1px;
  height: 18px;
  margin-left: 5px;
  background: #d0d5da;
}

/* properties palette */
.props {
  width: 222px;
  margin: 1px 0 0 5px;
  padding: 0 17px 0 5px;
  background: #434c58;
  color: #d3d8dd;
}

.props-head {
  display: flex;
  justify-content: space-between;
  align-items: center;
  height: 21px;
  margin: 0 -17px 0 -5px;
  padding: 0 8px 1px 10px;
  background: #505b66;
}

.props-head h2 {
  font-size: 15px;
}

.props-sel {
  display: flex;
  align-items: center;
  gap: 8px;
  margin: 4px -9px 4px 0;
}

.props-sel .select-box {
  flex: 1;
  border-color: #515c67;
}

.props-sel .select-box select {
  padding: 0 1px;
}

.cat {
  justify-content: space-between;
  width: 100%;
  height: 25px;
  padding: 0 7px 1px 4px;
  border: 1px solid #505b66;
  background: #3a3e45;
}

table {
  width: 187px;
  margin: -1px 0 3px auto;
  border-collapse: collapse;
  table-layout: fixed;
}

th, td {
  height: 24px;
  padding: 0 3px;
  border: 1px solid #505b66;
  font-weight: normal;
  text-align: left;
  white-space: nowrap;
}

th {
  width: 58px;
}

td {
  padding: 0 2px 2px;
}

td.n {
  font-size: 12px;
}

.dim-vals td {
  color: #8b949d;
}

.swatch {
  display: inline-block;
  width: 10px;
  height: 10px;
  margin-right: 3px;
  border: 1px solid #16181b;
  background: #fff;
}

.line {
  display: inline-block;
  width: 36px;
  height: 1px;
  margin-right: 4px;
  vertical-align: middle;
  background: #d3d8dd;
}

.line.short {
  width: 32px;
  margin-right: 3px;
}

/* status bar */
.status {
  display: flex;
  align-items: center;
  height: 23px;
  padding: 0 2px 0 9px;
  font-weight: 300;
}

.coords {
  width: 256px;
  font-size: 12px;
  font-weight: normal;
}

.modes {
  display: grid;
  grid-template-columns: repeat(14, 1fr);
  justify-items: center;
  width: 314px;
}

.modes button {
  justify-content: center;
  width: 20px;
  height: 20px;
  border: 1px solid transparent;
}

.modes .on {
  border-color: #4a90c8;
  background: #3f5872;
}

.status-right {
  display: flex;
  gap: 5px;
  margin-left: auto;
  color: #9aa1a9;
}

.status-right .i {
  height: 14px;
}

.unit,
.scale {
  gap: 4px;
  font-size: 12px;
}

.unit .arr {
  margin: 0 4px;
}

.scale .arr {
  margin: 0 3px 0 4px;
}
```
